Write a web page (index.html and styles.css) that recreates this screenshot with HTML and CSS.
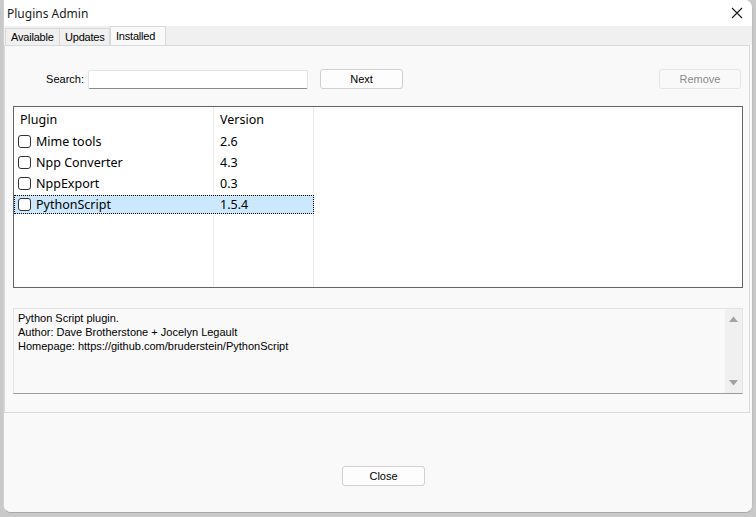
FILE: index.html
```html
<!DOCTYPE html>
<html>
<head>
<meta charset="utf-8">
<link rel="stylesheet" href="styles.css">
</head>
<body>
<div class="window">
  <div class="titlebar">
    <span class="title">Plugins Admin</span>
    <svg class="xicon" width="12" height="12" viewBox="0 0 12 12"><path d="M1 1 L11 11 M11 1 L1 11" stroke="#1a1a1a" stroke-width="1.1" fill="none"/></svg>
  </div>
  <div class="tabstrip">
    <div class="tab">Available</div>
    <div class="tab">Updates</div>
    <div class="tab active">Installed</div>
  </div>
  <div class="panel">
    <div class="searchrow">
      <label class="slabel">Search:</label>
      <div class="sinput"></div>
      <button class="btn next">Next</button>
      <button class="btn remove" disabled>Remove</button>
    </div>
    <div class="list">
      <div class="row head">
        <div class="cell c1">Plugin</div>
        <div class="cell c2">Version</div>
        <div class="cell c3"></div>
      </div>
      <div class="row">
        <div class="cell c1"><span class="cb"></span>Mime tools</div>
        <div class="cell c2">2.6</div>
        <div class="cell c3"></div>
      </div>
      <div class="row">
        <div class="cell c1"><span class="cb"></span>Npp Converter</div>
        <div class="cell c2">4.3</div>
        <div class="cell c3"></div>
      </div>
      <div class="row">
        <div class="cell c1"><span class="cb"></span>NppExport</div>
        <div class="cell c2">0.3</div>
        <div class="cell c3"></div>
      </div>
      <div class="row selrow">
        <div class="sel">
          <div class="cell s1"><span class="cb"></span>PythonScript</div>
          <div class="cell s2">1.5.4</div>
        </div>
        <div class="cell c3"></div>
      </div>
      <div class="row filler">
        <div class="cell c1"></div>
        <div class="cell c2"></div>
        <div class="cell c3"></div>
      </div>
    </div>
    <div class="desc">
      <div class="desctext">
        <div>Python Script plugin.</div>
        <div>Author: Dave Brotherstone + Jocelyn Legault</div>
        <div>Homepage: https://github.com/bruderstein/PythonScript</div>
      </div>
      <div class="vscroll">
        <svg width="9" height="6" viewBox="0 0 9 6"><path d="M0 6 L4.5 0.5 L9 6 Z" fill="#a3a3a3"/></svg>
        <svg width="9" height="6" viewBox="0 0 9 6"><path d="M0 0 L4.5 5.5 L9 0 Z" fill="#a3a3a3"/></svg>
      </div>
    </div>
  </div>
  <div class="footer">
    <button class="btn close">Close</button>
  </div>
</div>
</body>
</html>
```
FILE: styles.css
```css
* { box-sizing: border-box; }
html, body { margin: 0; padding: 0; }
body {
  width: 756px;
  height: 517px;
  overflow: hidden;
  background: #c9c9c9;
  font-family: "Liberation Sans", Arial, sans-serif;
  font-size: 11px;
  color: #000;
}
.window {
  margin-left: 3px;
  width: 750px;
  height: 513px;
  background: #f9f9f9;
  border-radius: 0 8px 8px 8px;
  border-left: 1px solid #d0d0d0;
  border-right: 1px solid #bdbdbd;
  border-bottom: 1px solid #a8a8a8;
  display: flex;
  flex-direction: column;
  overflow: hidden;
}
.titlebar {
  height: 26px;
  background: #ffffff;
  display: flex;
  align-items: center;
  padding: 0 8px 0 3px;
  flex: none;
}
.title {
  font-family: "Noto Sans", sans-serif;
  font-size: 12px;
  color: #1b1b1b;
  flex: 1;
}
.xicon { margin-right: 1px; }
.tabstrip {
  height: 19px;
  background: #f0f0f0;
  display: flex;
  align-items: flex-end;
  padding-left: 1px;
  flex: none;
}
.tab {
  height: 17px;
  border: 1px solid #d9d9d9;
  border-bottom: none;
  background: #f0f0f0;
  padding: 0 0 0 5px;
  line-height: 16px;
  font-size: 11px;
  letter-spacing: -0.2px;
  margin-right: -1px;
  white-space: nowrap;
}
.tab:nth-child(1) { width: 55px; }
.tab:nth-child(2) { width: 51px; }
.tab.active {
  height: 19px;
  width: 56px;
  background: #f9f9f9;
  line-height: 18px;
  margin-left: 1px;
}
.panel {
  margin: 0 2px 0 0;
  height: 368px;
  border: 1px solid #d9d9d9;
  background: #f9f9f9;
  padding: 23px 6px 18px 8px;
  display: flex;
  flex-direction: column;
  flex: none;
}
.searchrow {
  height: 20px;
  display: flex;
  align-items: flex-start;
  flex: none;
}
.slabel {
  width: 71px;
  text-align: right;
  line-height: 20px;
  margin-right: 4px;
}
.sinput {
  width: 220px;
  height: 19px;
  margin-top: 1px;
  background: #fff;
  border: 1px solid #e3e3e3;
  border-bottom-color: #8a8a8a;
  border-radius: 2px;
}
.btn {
  font-family: inherit;
  font-size: 11px;
  height: 20px;
  background: #fdfdfd;
  border: 1px solid #d0d0d0;
  border-radius: 3px;
  padding: 0;
  color: #000;
  line-height: 18px;
}
.next { width: 83px; margin-left: 12px; }
.remove {
  width: 82px;
  margin-left: auto;
  margin-right: 2px;
  background: #f9f9f9;
  border-color: #e6e6e6;
  color: #8c8c8c;
}
.list {
  margin-top: 17px;
  height: 182px;
  border: 1px solid #646464;
  background: #fff;
  display: flex;
  flex-direction: column;
  flex: none;
  font-family: "Noto Sans", sans-serif;
  font-size: 12.5px;
}
.row {
  display: grid;
  grid-template-columns: 200px 100px 1fr;
  height: 21px;
  flex: none;
}
.row.head { height: 24px; }
.row.filler { flex: 1; }
.cell {
  display: flex;
  align-items: center;
  padding-left: 6px;
  white-space: nowrap;
}
.c1, .c2 { border-right: 1px solid #ebebeb; }
.row:not(.head) .c1 { padding-left: 4px; }
.cb {
  width: 13px;
  height: 13px;
  border: 1px solid #333;
  border-radius: 3px;
  background: #fff;
  margin-right: 5px;
  flex: none;
}
.selrow { grid-template-columns: 300px 1fr; }
.sel {
  display: grid;
  grid-template-columns: 200px 100px;
  margin: 1px 0 1px;
  background: #cce8ff;
  outline: 1px dotted #000;
  outline-offset: -1px;
}
.s1 { padding-left: 4px; }
.desc {
  margin-top: 20px;
  height: 86px;
  border: 1px solid #e3e3e3;
  border-bottom-color: #9a9a9a;
  background: #f9f9f9;
  display: flex;
  flex: none;
}
.desctext {
  flex: 1;
  padding: 2px 0 0 4px;
  font-size: 11px;
  line-height: 14px;
}
.vscroll {
  width: 17px;
  background: #f0f0f0;
  display: flex;
  flex-direction: column;
  justify-content: space-between;
  align-items: center;
  padding: 7px 0 7px;
}
.footer {
  flex: 1;
  padding: 53px 0 0 338px;
  background: #f9f9f9;
}
.close { width: 83px; }
```
